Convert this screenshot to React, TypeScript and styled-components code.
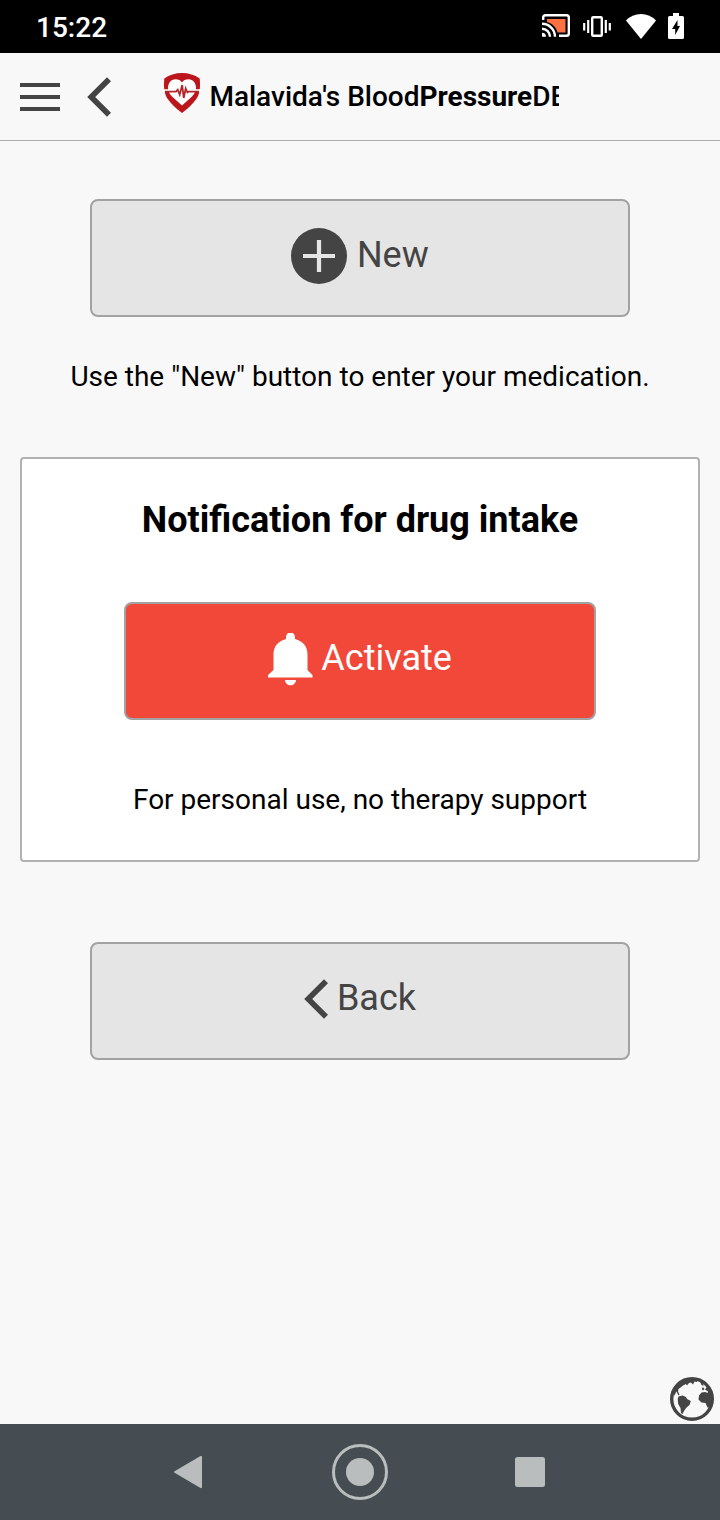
import React from "react";
import styled, { createGlobalStyle } from "styled-components";

const Global = createGlobalStyle`
  *, *::before, *::after { box-sizing: border-box; }
  body { margin: 0; background: #f8f8f8; font-family: Roboto, "Liberation Sans", sans-serif; }
  svg { display: block; flex: none; }
`;

const Screen = styled.div`
  width: 720px;
  height: 1520px;
  display: flex;
  flex-direction: column;
  background: #f8f8f8;
  color: #000;
  overflow: hidden;
`;

const StatusBar = styled.header`
  height: 53px;
  flex: none;
  padding: 0 36px 0 36px;
  display: flex;
  align-items: center;
  justify-content: space-between;
  background: #000;
  color: #fff;
`;

const Clock = styled.time`
  font-size: 28px;
  font-weight: 500;
  line-height: 33px;
  padding-top: 2px;
`;

const StatusIcons = styled.div`
  display: flex;
  align-items: center;
  padding-bottom: 1px;
`;

const Toolbar = styled.div`
  height: 88px;
  flex: none;
  display: flex;
  align-items: center;
  padding-left: 20px;
  border-bottom: 1px solid #adadad;
`;

const ToolButton = styled.button<{ $gap: number }>`
  border: 0;
  padding: 0;
  margin-right: ${(p) => p.$gap}px;
  background: none;
  color: #444;
`;

const Logo = styled.span`
  padding-bottom: 8px;
`;

const Title = styled.h1`
  width: 350px;
  margin: 0 0 0 8px;
  padding-left: 0.4px;
  font-size: 28px;
  font-weight: 500;
  line-height: 40px;
  white-space: nowrap;
  overflow: hidden;
  b { font-weight: 700; }
`;

const Content = styled.main`
  flex: 1;
  display: flex;
  flex-direction: column;
  align-items: center;
  padding-top: 58px;
`;

const ActionButton = styled.button<{ $width: number; $tone: "plain" | "alert"; $gap: number }>`
  width: ${(p) => p.$width}px;
  height: 118px;
  flex: none;
  display: flex;
  align-items: center;
  justify-content: center;
  gap: ${(p) => p.$gap}px;
  padding: 0 0 6px;
  border: 2px solid #a2a2a2;
  border-radius: 8px;
  background: ${(p) => (p.$tone === "alert" ? "#f1483a" : "#e5e5e5")};
  color: ${(p) => (p.$tone === "alert" ? "#fff" : "#444")};
  font: 400 36px/48px Roboto, "Liberation Sans", sans-serif;
  svg { margin-top: 2px; }
`;

const Hint = styled.p`
  margin: 0;
  font-size: 28px;
  line-height: 36px;
  white-space: nowrap;
`;

const Intro = styled(Hint)`
  margin: 42px 0 62px;
`;

const Card = styled.section`
  width: 680px;
  height: 405px;
  flex: none;
  margin-bottom: 80px;
  padding-top: 38px;
  display: flex;
  flex-direction: column;
  align-items: center;
  border: 2px solid #b2b2b2;
  border-radius: 4px;
  background: #fff;
`;

const CardTitle = styled.h2`
  margin: 0 0 59px;
  font-size: 36px;
  font-weight: 700;
  line-height: 46px;
`;

const CardNote = styled(Hint)`
  margin-top: 62px;
`;

const Footer = styled.div`
  display: flex;
  justify-content: flex-end;
  padding: 0 6px 3px 0;
  margin-top: auto;
  width: 100%;
`;

const NavBar = styled.nav`
  height: 96px;
  flex: none;
  display: flex;
  align-items: center;
  padding-left: 173px;
  background: #454d52;
  color: #b9bdbe;
`;

const NavItem = styled.div<{ $before?: number }>`
  margin-left: ${(p) => p.$before ?? 0}px;
`;

const Chevron = () => (
  <svg width="24" height="40" viewBox="0 0 24 40" fill="currentColor">
    <path d="M20 0.3 24 4.2 8.2 20 24 35.8 20 39.7 0.2 20Z" />
  </svg>
);

const Menu = () => (
  <svg width="40" height="28" viewBox="0 0 40 28" fill="currentColor">
    <path d="M0 0h40v4H0zM0 12h40v4H0zM0 24h40v4H0z" />
  </svg>
);

const HeartShield = () => (
  <svg width="38" height="42" viewBox="0 0 38 42">
    <path d="M1.300 6.500Q9 1 19 1T36.700 6.500C37.300 14 37.300 20 34 26Q28.500 34 19 41Q9.500 34 4 26C.7 20 .7 14 1.300 6.500Z" fill="#bd151c" />
    <path d="M19 10.500C16.500 6.500 9.500 6 6.500 10.500C3.500 15.500 5.500 21 9 24.500L19 33.500L29 24.500C32.500 21 34.500 15.500 31.500 10.500C28.500 6 21.500 6.500 19 10.500Z" fill="#fff" />
    <path d="M0 18.600h8M30 18.600h8" stroke="#fff" strokeWidth="2.800" />
    <path d="M2 19.600h11l1.700-1.900 2 5 2.500-9.700 1.500 13 2-9.500 1.700 4 1.300-.9H36" fill="none" stroke="#b3262d" strokeWidth="1.800" />
  </svg>
);

const Plus = () => (
  <svg width="56" height="56" viewBox="0 0 56 56">
    <circle cx="28" cy="28" r="28" fill="#444" />
    <path d="M12 28h32M28 12v32" stroke="#e5e5e5" strokeWidth="4.200" />
  </svg>
);

const Bell = () => (
  <svg width="45" height="53" viewBox="0 0 45 53" fill="currentColor">
    <path d="M18 6V4a4.500 4.500 0 0 1 9 0v2C35 8 39.500 13.500 39.500 21.500V37L44.500 42v2.500H0V42l5.500-5V21.500C5.500 13.500 10 8 18 6Z" />
    <path d="M17 47h11c-.3 3.200-2.400 5.300-5.500 5.300S17.300 50.200 17 47Z" />
  </svg>
);

const Globe = () => (
  <svg width="44" height="44" viewBox="0 0 44 44">
    <circle cx="22" cy="22" r="20.300" fill="#f8f8f8" stroke="#444" strokeWidth="3.400" />
    <g fill="#444">
      <path d="M4 12 12 4 20 1.500 28 2 27 5 24.500 4.500 23 7.500 21 5.500 19 6 17 8.500 16 7 13 8.500 10.500 10.500 8.500 12 8 14.500 9.500 17.500 8.500 18.500 6.500 14.500 4 19Z" />
      <path d="M35 5 41 13 42 20 40.500 30 37.500 30.500 35.500 26 31.500 25.500 28.500 22.500 29 18.500 31.500 15.500 35 15 37.500 16 38 14.500 35 12.500 36.500 10.500Z" />
      <path d="M8.500 19.500 12.500 18.500 16 20 17 22 20.800 24 19.500 28 16.500 30.500 14 34 12.500 37 11 36 10.500 31 8.200 27 7.700 22Z" />
      <path d="M30 4.500 32.500 5 33.500 9 31.500 8ZM33 10 34.500 12 33 13.500 31.800 12Z" />
    </g>
  </svg>
);

const Cast = () => (
  <svg width="28" height="24" viewBox="0 0 28 24">
    <path d="M5 5h18.500v13.500h-8C14 13 10.500 9.500 5 8Z" fill="#ff7043" />
    <g fill="none" stroke="#fff" strokeWidth="2.400">
      <path d="M1.200 6V3.500Q1.200 1.200 3.500 1.200h21Q26.800 1.200 26.800 3.500v16Q26.800 21.800 24.500 21.800H17" />
      <path d="M0 9.800A13 13 0 0 1 13 22.800M0 14.800A8 8 0 0 1 8 22.800" />
    </g>
    <path d="M0 18.800A4 4 0 0 1 4 22.800H0Z" fill="#fff" />
  </svg>
);

const Vibrate = () => (
  <svg width="28" height="21" viewBox="0 0 28 21">
    <rect x="9.200" y="1.200" width="9.600" height="18.600" rx="1" fill="none" stroke="#fff" strokeWidth="2.400" />
    <path d="M1.200 7v7.500M5.200 4v13M22.800 4v13M26.800 7v7.500" stroke="#fff" strokeWidth="2.200" />
  </svg>
);

const Wifi = () => (
  <svg width="30" height="25" viewBox="0 0 30 25">
    <path d="M0 6.500Q6 0 15 0T30 6.500L15 25Z" fill="#fff" />
  </svg>
);

const Battery = () => (
  <svg width="16" height="26" viewBox="0 0 16 26">
    <path d="M5 0h6v3h3.500Q16 3 16 4.500v20Q16 26 14.500 26h-13Q0 26 0 24.500v-20Q0 3 1.500 3H5Z" fill="#fff" />
    <path d="M9.500 7 4 16h3.200v6L12 13H9.500Z" fill="#000" />
  </svg>
);

const IconSlot = styled.span<{ $after?: number }>`
  margin-right: ${(p) => p.$after ?? 0}px;
`;

export default function App() {
  return (
    <>
      <Global />
      <Screen>
        <StatusBar>
          <Clock>15:22</Clock>
          <StatusIcons>
            <IconSlot $after={13}><Cast /></IconSlot>
            <IconSlot $after={15}><Vibrate /></IconSlot>
            <IconSlot $after={12}><Wifi /></IconSlot>
            <IconSlot><Battery /></IconSlot>
          </StatusIcons>
        </StatusBar>
        <Toolbar>
          <ToolButton $gap={27} aria-label="Menu"><Menu /></ToolButton>
          <ToolButton $gap={52} aria-label="Back"><Chevron /></ToolButton>
          <Logo><HeartShield /></Logo>
          <Title>Malavida's Blood<b>Pressure</b>DB</Title>
        </Toolbar>
        <Content>
          <ActionButton $width={540} $tone="plain" $gap={9.6}><Plus />New</ActionButton>
          <Intro>Use the "New" button to enter your medication.</Intro>
          <Card>
            <CardTitle>Notification for drug intake</CardTitle>
            <ActionButton $width={472} $tone="alert" $gap={8.2}><Bell />Activate</ActionButton>
            <CardNote>For personal use, no therapy support</CardNote>
          </Card>
          <ActionButton $width={540} $tone="plain" $gap={9}><Chevron />Back</ActionButton>
          <Footer><Globe /></Footer>
        </Content>
        <NavBar>
          <NavItem>
            <svg width="30" height="34" viewBox="0 0 30 34" fill="currentColor">
              <path d="M27.500 1Q29 .5 29 2v30q0 1.500-1.500 1L2 18Q0 17 2 16Z" />
            </svg>
          </NavItem>
          <NavItem $before={129}>
            <svg width="56" height="56" viewBox="0 0 56 56">
              <circle cx="28" cy="28" r="26.500" fill="none" stroke="currentColor" strokeWidth="3" />
              <circle cx="28" cy="28" r="14" fill="currentColor" />
            </svg>
          </NavItem>
          <NavItem $before={127}>
            <svg width="30" height="30" viewBox="0 0 30 30" fill="currentColor">
              <rect width="30" height="30" rx="2.500" />
            </svg>
          </NavItem>
        </NavBar>
      </Screen>
    </>
  );
}
